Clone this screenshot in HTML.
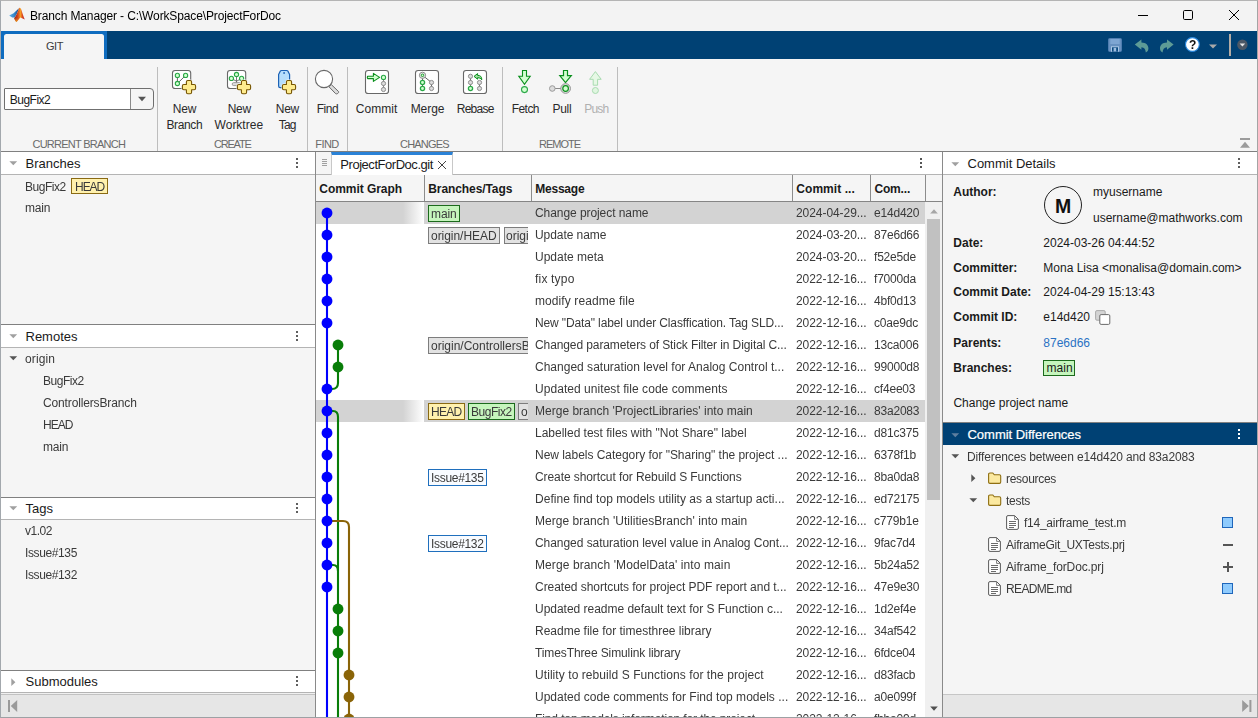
<!DOCTYPE html>
<html lang="en">
<head>
<meta charset="utf-8">
<title>Branch Manager</title>
<style>*{box-sizing:border-box;margin:0;padding:0}
html,body{width:1258px;height:718px;overflow:hidden;background:#f5f5f5}
body{font-family:"Liberation Sans",sans-serif;font-size:12px;color:#1a1a1a;position:relative}
.t{position:absolute;white-space:pre}
.b{position:absolute}
svg{position:absolute;overflow:visible}
#frame{position:absolute;left:0;top:0;width:1258px;height:718px;border:1px solid #b4b4b4;border-left-color:#a3a8ad;border-right-color:#a4a4a4;border-bottom-color:#9da1a4;z-index:50}
#title{position:absolute;left:0;top:0;width:1258px;height:31px;background:#f3f3f3}
#blue{position:absolute;left:1px;top:31px;width:1256px;height:28px;background:#004174}
#tabwrap{position:absolute;left:1px;top:31px;width:106px;height:28px;background:#0f6cbf}
#tab{position:absolute;left:4px;top:34px;width:100px;height:25px;background:#f5f5f5;border-radius:2.5px 2.5px 0 0}
#strip{position:absolute;left:1px;top:59px;width:1256px;height:92px;background:#f5f5f5}
.vs{position:absolute;top:67px;width:1px;height:84px;background:#bdbdbd}
.hl{position:absolute;height:1px;background:#7f7f7f}
.ph{position:absolute;height:24px;background:#fff;border-top:1px solid #808080;border-bottom:1px solid #b4b4b4}
.sel{position:absolute;left:316px;width:609px;height:22px;background:linear-gradient(to right,#d3d3d3 0,#d3d3d3 87px,#fff 108px,#d3d3d3 108px)}
.bd{position:absolute;height:17px;border:1px solid #7d7d7d;background:#e2e2e2}
.bd.g{background:#c6f5bd;border-color:#1c6a1c}
.bd.y{background:#fff1ae;border-color:#8a6a14}
.bd.w{background:#f8fbff;border-color:#1f6fbd}
.clip{position:absolute;overflow:hidden}
.cs{position:absolute;top:175px;width:1px;height:26px;background:#8c8c8c}
.gy{will-change:transform}
</style>
</head>
<body>
<div id="title"></div>
<svg style="left:8px;top:6px" width="18" height="18" viewBox="8 6 18 18">
<defs>
<linearGradient id="lgB" x1="0" y1="0" x2="1" y2="0"><stop offset="0" stop-color="#5fb0e6"/><stop offset="0.6" stop-color="#2f7fc4"/><stop offset="1" stop-color="#1b3f7a"/></linearGradient>
<linearGradient id="lgO" x1="0" y1="0" x2="1" y2="0"><stop offset="0" stop-color="#8c1d18"/><stop offset="0.35" stop-color="#d4451c"/><stop offset="0.6" stop-color="#f59a23"/><stop offset="0.8" stop-color="#d8401f"/><stop offset="1" stop-color="#b8242a"/></linearGradient>
<linearGradient id="lgY" x1="0" y1="0" x2="0" y2="1"><stop offset="0" stop-color="#e8601c" stop-opacity="0"/><stop offset="1" stop-color="#f7b71d"/></linearGradient>
</defs>
<path d="M9.2 15.4 L13.6 13.2 L17.6 9.6 L19 8.2 L17 13.5 L14.6 17.6 L12.2 17.6 Z" fill="url(#lgB)"/>
<path d="M19.6 7.7 C20.4 7.6 21 8.6 21.6 10.4 C22.6 13.6 23.6 17 24.8 19.4 C23.4 19 21.8 17.8 20.4 17.4 C19 18.6 17.8 20.8 16.3 22 C15.4 20.8 14.6 19.4 14.1 18.2 C15.6 16.6 17.2 13.4 18.4 10 C18.8 8.8 19.1 7.8 19.6 7.7 Z" fill="url(#lgO)"/>
<path d="M14.1 18.2 C14.6 19.4 15.4 20.8 16.3 22 C17.8 20.8 19 18.6 20.4 17.4 C18.6 17 16 17.4 14.1 18.2 Z" fill="url(#lgY)"/>
</svg>
<div class="t gy" style="left:30.00px;top:8px;font-size:12px;line-height:16px;color:#000;letter-spacing:-0.13px;">Branch Manager - C:\WorkSpace\ProjectForDoc</div>
<svg style="left:1130px;top:5px" width="120" height="22" viewBox="1130 5 120 22" fill="none" stroke="#000" stroke-width="1">
<path d="M1138 15.5 H1148"/>
<rect x="1183.5" y="10.5" width="9" height="9" rx="1.2"/>
<path d="M1229 10 L1239 20 M1239 10 L1229 20"/>
</svg>
<div id="blue"></div><div id="tabwrap"></div><div id="tab"></div>
<div class="t" style="left:46.00px;top:38px;font-size:11px;line-height:16px;color:#3c3c3c;letter-spacing:-0.45px;">GIT</div>
<svg style="left:1100px;top:32px" width="156" height="26" viewBox="1100 32 156 26">
<g><rect x="1108.5" y="38.5" width="13" height="13" rx="1" fill="#6791c0" stroke="#4f7db0" stroke-width="1"/><rect x="1110.3" y="39" width="9.4" height="5" fill="#7ea6d2"/><rect x="1111" y="46.3" width="8" height="5.4" fill="#a9c6e4"/><rect x="1112" y="47.3" width="6" height="4.4" fill="#0b4a80"/><rect x="1113.6" y="47.8" width="2.6" height="3.6" fill="#9dbde0"/></g>
<path d="M1134.8 44.6 L1141.4 39.4 V42.6 C1146.2 42.6 1148.4 45.4 1148.4 48.6 C1148.4 50.4 1147.4 51.8 1145.8 52.6 C1145.6 49.4 1144.4 47.4 1141.4 47.2 V49.8 Z" fill="#5d9b96"/>
<path d="M1173.6 44.6 L1167 39.4 V42.6 C1162.2 42.6 1160 45.4 1160 48.6 C1160 50.4 1161 51.8 1162.6 52.6 C1162.8 49.4 1164 47.4 1167 47.2 V49.8 Z" fill="#5d9b96"/>
<circle cx="1192.4" cy="44.5" r="6.9" fill="#fff" stroke="#2586de" stroke-width="1.1"/>
<path d="M1209 44.5 h8 l-4 4 z" fill="#a9a9a9"/>
<rect x="1229" y="34" width="2" height="22" fill="#b3aca5"/>
<circle cx="1242.4" cy="44.7" r="5.2" fill="#4c5866"/>
<path d="M1239.6 43.6 h5.6 l-2.8 3 z" fill="#e8e8e8"/>
</svg>
<div class="t gy" style="left:1189.00px;top:37px;font-size:12px;line-height:16px;color:#111;font-weight:bold;">?</div>
<div id="strip"></div>
<div class="vs" style="left:157px"></div>
<div class="vs" style="left:307px"></div>
<div class="vs" style="left:347px"></div>
<div class="vs" style="left:502px"></div>
<div class="vs" style="left:617px"></div>
<div class="hl" style="left:1px;top:151px;width:1256px"></div>
<div class="b" style="left:4px;top:88px;width:150px;height:22px;border:1px solid #6f6f6f;border-radius:1px 4px 4px 1px;background:#f5f5f5"></div>
<div class="b" style="left:5px;top:89px;width:126px;height:20px;background:#fff;border-right:1px solid #8a8a8a"></div>
<svg style="left:137px;top:96px" width="10" height="6" viewBox="0 0 10 6"><path d="M1 0.8 h8 l-4 4.4 z" fill="#555"/></svg>
<div class="t" style="left:9.70px;top:92px;font-size:12px;line-height:16px;color:#1a1a1a;letter-spacing:-0.49px;">BugFix2</div>
<div class="t" style="left:32.46px;top:136px;font-size:11px;line-height:16px;color:#6a6a6a;letter-spacing:-0.74px;">CURRENT BRANCH</div>
<div class="t" style="left:213.99px;top:136px;font-size:11px;line-height:16px;color:#6a6a6a;letter-spacing:-1.2px;">CREATE</div>
<div class="t" style="left:315.27px;top:136px;font-size:11px;line-height:16px;color:#6a6a6a;letter-spacing:-0.54px;">FIND</div>
<div class="t" style="left:400.12px;top:136px;font-size:11px;line-height:16px;color:#6a6a6a;letter-spacing:-0.84px;">CHANGES</div>
<div class="t" style="left:538.99px;top:136px;font-size:11px;line-height:16px;color:#6a6a6a;letter-spacing:-1.01px;">REMOTE</div>
<div class="t" style="left:172.80px;top:101px;font-size:12px;line-height:16px;color:#2a2a2a;letter-spacing:-0.17px;">New</div>
<div class="t" style="left:166.40px;top:117px;font-size:12px;line-height:16px;color:#2a2a2a;letter-spacing:-0.37px;">Branch</div>
<div class="t" style="left:227.70px;top:101px;font-size:12px;line-height:16px;color:#2a2a2a;letter-spacing:-0.27px;">New</div>
<div class="t" style="left:214.60px;top:117px;font-size:12px;line-height:16px;color:#2a2a2a;">Worktree</div>
<div class="t" style="left:275.80px;top:101px;font-size:12px;line-height:16px;color:#2a2a2a;letter-spacing:-0.31px;">New</div>
<div class="t" style="left:278.70px;top:117px;font-size:12px;line-height:16px;color:#2a2a2a;letter-spacing:-0.79px;">Tag</div>
<div class="t" style="left:316.70px;top:101px;font-size:12px;line-height:16px;color:#2a2a2a;letter-spacing:-0.49px;">Find</div>
<div class="t" style="left:355.80px;top:101px;font-size:12px;line-height:16px;color:#2a2a2a;letter-spacing:0.06px;">Commit</div>
<div class="t" style="left:410.70px;top:101px;font-size:12px;line-height:16px;color:#2a2a2a;letter-spacing:-0.06px;">Merge</div>
<div class="t" style="left:456.80px;top:101px;font-size:12px;line-height:16px;color:#2a2a2a;letter-spacing:-0.76px;">Rebase</div>
<div class="t" style="left:511.70px;top:101px;font-size:12px;line-height:16px;color:#2a2a2a;letter-spacing:-0.54px;">Fetch</div>
<div class="t" style="left:552.60px;top:101px;font-size:12px;line-height:16px;color:#2a2a2a;letter-spacing:-0.33px;">Pull</div>
<div class="t" style="left:584.30px;top:101px;font-size:12px;line-height:16px;color:#b0b0b0;letter-spacing:-0.81px;">Push</div>
<svg style="left:1240px;top:138px" width="10" height="10" viewBox="0 0 10 10"><path d="M0 0 h10 v2 h-10 z M5 3.8 l5 6 h-10 z" fill="#9c9c9c"/></svg>
<svg style="left:160px;top:64px" width="460" height="36" viewBox="160 64 460 36" fill="none"><rect x="172.5" y="70.5" width="18.2" height="18" rx="2.6" fill="#fff" stroke="#686868" stroke-width="1.1"/><path d="M177.4 75.4 V83.5 M177.4 83.5 L185.6 75.4" stroke="#555" stroke-width="0.9"/><circle cx="177.4" cy="75.4" r="2.1" fill="#d2ffd0" stroke="#2aa847" stroke-width="1.1"/><circle cx="185.6" cy="75.4" r="2.1" fill="#d2ffd0" stroke="#2aa847" stroke-width="1.1"/><circle cx="177.4" cy="83.5" r="2.1" fill="#d2ffd0" stroke="#2aa847" stroke-width="1.1"/><path d="M187.8 80.5 H190.2 Q191.6 80.5 191.6 81.9 V84.5 H194.2 Q195.6 84.5 195.6 85.9 V88.29999999999998 Q195.6 89.69999999999999 194.2 89.69999999999999 H191.6 V92.29999999999998 Q191.6 93.69999999999999 190.2 93.69999999999999 H187.8 Q186.4 93.69999999999999 186.4 92.29999999999998 V89.69999999999999 H183.8 Q182.4 89.69999999999999 182.4 88.29999999999998 V85.9 Q182.4 84.5 183.8 84.5 H186.4 V81.9 Q186.4 80.5 187.8 80.5 Z" fill="none" stroke="#f8f8f8" stroke-width="1.9" stroke-linejoin="round"/><path d="M187.8 80.5 H190.2 Q191.6 80.5 191.6 81.9 V84.5 H194.2 Q195.6 84.5 195.6 85.9 V88.29999999999998 Q195.6 89.69999999999999 194.2 89.69999999999999 H191.6 V92.29999999999998 Q191.6 93.69999999999999 190.2 93.69999999999999 H187.8 Q186.4 93.69999999999999 186.4 92.29999999999998 V89.69999999999999 H183.8 Q182.4 89.69999999999999 182.4 88.29999999999998 V85.9 Q182.4 84.5 183.8 84.5 H186.4 V81.9 Q186.4 80.5 187.8 80.5 Z" fill="#ffec8e" stroke="#765400" stroke-width="1.1" stroke-linejoin="round"/><rect x="227.5" y="70.5" width="18.2" height="18" rx="2.6" fill="#fff" stroke="#686868" stroke-width="1.1"/><path d="M236.5 76 V83 M232.6 79.2 L236.5 81.2 L240.4 79.2" stroke="#666" stroke-width="0.9"/><rect x="232.2" y="82.6" width="8.6" height="3" rx="1.5" fill="#dedede" stroke="#8a8a8a" stroke-width="0.8"/><circle cx="236.5" cy="74.5" r="2.1" fill="#d2ffd0" stroke="#2aa847" stroke-width="1.1"/><circle cx="231.4" cy="78.4" r="2.1" fill="#d2ffd0" stroke="#2aa847" stroke-width="1.1"/><circle cx="241.6" cy="78.4" r="2.1" fill="#d2ffd0" stroke="#2aa847" stroke-width="1.1"/><path d="M242.8 80.5 H245.2 Q246.6 80.5 246.6 81.9 V84.5 H249.2 Q250.6 84.5 250.6 85.9 V88.29999999999998 Q250.6 89.69999999999999 249.2 89.69999999999999 H246.6 V92.29999999999998 Q246.6 93.69999999999999 245.2 93.69999999999999 H242.8 Q241.4 93.69999999999999 241.4 92.29999999999998 V89.69999999999999 H238.8 Q237.4 89.69999999999999 237.4 88.29999999999998 V85.9 Q237.4 84.5 238.8 84.5 H241.4 V81.9 Q241.4 80.5 242.8 80.5 Z" fill="none" stroke="#f8f8f8" stroke-width="1.9" stroke-linejoin="round"/><path d="M242.8 80.5 H245.2 Q246.6 80.5 246.6 81.9 V84.5 H249.2 Q250.6 84.5 250.6 85.9 V88.29999999999998 Q250.6 89.69999999999999 249.2 89.69999999999999 H246.6 V92.29999999999998 Q246.6 93.69999999999999 245.2 93.69999999999999 H242.8 Q241.4 93.69999999999999 241.4 92.29999999999998 V89.69999999999999 H238.8 Q237.4 89.69999999999999 237.4 88.29999999999998 V85.9 Q237.4 84.5 238.8 84.5 H241.4 V81.9 Q241.4 80.5 242.8 80.5 Z" fill="#ffec8e" stroke="#765400" stroke-width="1.1" stroke-linejoin="round"/><path d="M281.6 70.5 H286.6 Q287.6 70.5 288.1 71.4 L289.6 74.6 V86 Q289.6 87.6 288 87.6 H280.2 Q278.6 87.6 278.6 86 V74.6 L280.1 71.4 Q280.6 70.5 281.6 70.5 Z" fill="#b6defc" stroke="#1c62b6" stroke-width="1.2" stroke-linejoin="round"/><rect x="283.3" y="72.2" width="1.6" height="1.6" fill="#1c62b6"/><path d="M287.79999999999995 80.5 H290.20000000000005 Q291.6 80.5 291.6 81.9 V84.5 H294.20000000000005 Q295.6 84.5 295.6 85.9 V88.29999999999998 Q295.6 89.69999999999999 294.20000000000005 89.69999999999999 H291.6 V92.29999999999998 Q291.6 93.69999999999999 290.20000000000005 93.69999999999999 H287.79999999999995 Q286.4 93.69999999999999 286.4 92.29999999999998 V89.69999999999999 H283.79999999999995 Q282.4 89.69999999999999 282.4 88.29999999999998 V85.9 Q282.4 84.5 283.79999999999995 84.5 H286.4 V81.9 Q286.4 80.5 287.79999999999995 80.5 Z" fill="none" stroke="#f8f8f8" stroke-width="1.9" stroke-linejoin="round"/><path d="M287.79999999999995 80.5 H290.20000000000005 Q291.6 80.5 291.6 81.9 V84.5 H294.20000000000005 Q295.6 84.5 295.6 85.9 V88.29999999999998 Q295.6 89.69999999999999 294.20000000000005 89.69999999999999 H291.6 V92.29999999999998 Q291.6 93.69999999999999 290.20000000000005 93.69999999999999 H287.79999999999995 Q286.4 93.69999999999999 286.4 92.29999999999998 V89.69999999999999 H283.79999999999995 Q282.4 89.69999999999999 282.4 88.29999999999998 V85.9 Q282.4 84.5 283.79999999999995 84.5 H286.4 V81.9 Q286.4 80.5 287.79999999999995 80.5 Z" fill="#ffec8e" stroke="#765400" stroke-width="1.1" stroke-linejoin="round"/><path d="M331.3 84.6 L338.6 91.6 Q339 92.6 337.6 93.6 Q336.4 94.2 335.6 93.6 L328.8 86.6 Z" fill="#dcdcdc" stroke="#666" stroke-width="1" stroke-linejoin="round"/><circle cx="324" cy="79" r="8.6" fill="#fff" stroke="#686868" stroke-width="1.1"/><rect x="365.5" y="70.5" width="23" height="23" rx="2.6" fill="#fff" stroke="#686868" stroke-width="1.1"/><path d="M383.5 77.4 V89.5" stroke="#777" stroke-width="0.9"/><circle cx="383.5" cy="77.4" r="2.1" fill="#d2ffd0" stroke="#2aa847" stroke-width="1.1"/><circle cx="383.5" cy="83.5" r="2.1" fill="#dcdcdc" stroke="#8e8e8e" stroke-width="1"/><circle cx="383.5" cy="89.5" r="2.1" fill="#dcdcdc" stroke="#8e8e8e" stroke-width="1"/><path d="M367.6 76.2 H373.4 V73.4 L379.6 77.4 L373.4 81.4 V78.6 H367.6 Q367 77.4 367.6 76.2 Z" fill="#d2ffd0" stroke="#0a8f1c" stroke-width="1.1" stroke-linejoin="round"/><rect x="415.5" y="70.5" width="23" height="23" rx="2.6" fill="#fff" stroke="#686868" stroke-width="1.1"/><path d="M422.5 75.3 V88.5 M422.5 75.3 L431.5 82.5 V88.5" stroke="#555" stroke-width="0.9"/><circle cx="422.5" cy="75.3" r="3.1" fill="#f0f0f0" stroke="#8a8a8a" stroke-width="1"/><circle cx="422.5" cy="75.3" r="1.3" fill="#d2ffd0" stroke="#0a8f1c" stroke-width="0.9"/><circle cx="422.5" cy="82.5" r="2.1" fill="#d2ffd0" stroke="#2aa847" stroke-width="1.3"/><circle cx="422.5" cy="88.5" r="2.1" fill="#d2ffd0" stroke="#2aa847" stroke-width="1.3"/><circle cx="431.5" cy="82.5" r="2.1" fill="#dcdcdc" stroke="#8e8e8e" stroke-width="1"/><circle cx="431.5" cy="88.5" r="2.1" fill="#dcdcdc" stroke="#8e8e8e" stroke-width="1"/><rect x="463.5" y="70.5" width="23" height="23" rx="2.6" fill="#fff" stroke="#686868" stroke-width="1.1"/><path d="M470.5 76.3 V88.5 M479.5 82.5 V88.5" stroke="#666" stroke-width="0.9"/><circle cx="470.5" cy="76.3" r="2.1" fill="#dcdcdc" stroke="#8e8e8e" stroke-width="1"/><circle cx="470.5" cy="82.5" r="2.1" fill="#dcdcdc" stroke="#8e8e8e" stroke-width="1"/><circle cx="479.5" cy="82.5" r="2.1" fill="#dcdcdc" stroke="#8e8e8e" stroke-width="1"/><circle cx="479.5" cy="88.5" r="2.1" fill="#dcdcdc" stroke="#8e8e8e" stroke-width="1"/><circle cx="470.5" cy="88.5" r="2.1" fill="#d2ffd0" stroke="#2aa847" stroke-width="1.3"/><path d="M474 76.4 L477.6 73.6 V75.4 Q481.8 75.2 481.8 79.8 Q480.6 77.6 477.6 77.6 V79.2 Z" fill="#9fe0a0" stroke="#0a8f1c" stroke-width="1" stroke-linejoin="round"/><path d="M522.5 70.5 H526.5 V76.3 H530.2 L524.5 84.2 L518.8 76.3 H522.5 Z" fill="#d2ffd0" stroke="#0a8f1c" stroke-width="1.1" stroke-linejoin="miter"/><circle cx="524.5" cy="89.6" r="3" fill="#d2ffd0" stroke="#2aa847" stroke-width="1.1"/><path d="M563.5 70.5 H567.5 V75.6 H571.3 L565.5 82.6 L559.8 75.6 H563.5 Z" fill="#d2ffd0" stroke="#0a8f1c" stroke-width="1.2" stroke-linejoin="miter"/><path d="M555 88.5 H561" stroke="#8a8a8a" stroke-width="1"/><circle cx="552.3" cy="88.5" r="2.8" fill="#dcdcdc" stroke="#9a9a9a" stroke-width="1"/><circle cx="565.6" cy="88.5" r="4.8" fill="#e6e6e6" stroke="#8e8e8e" stroke-width="1"/><circle cx="565.6" cy="88.5" r="2.8" fill="#d2ffd0" stroke="#0a8f1c" stroke-width="1.2"/><path d="M595.4 71.6 L601.2 79.3 H597.6 V85.2 H593.2 V79.3 H589.6 Z" fill="#e6f8e5" stroke="#a8dbb0" stroke-width="1" stroke-linejoin="miter"/><circle cx="595.4" cy="90.5" r="3" fill="#e0f6e0" stroke="#a8dbb0" stroke-width="1"/></svg>
<div class="b" style="left:315px;top:152px;width:1px;height:566px;background:#8a8a8a"></div>
<div class="ph" style="left:1px;top:151px;width:314px;height:24px;background:#fff"></div>
<svg style="left:9px;top:161.4px" width="9" height="5" viewBox="0 0 9 5"><path d="M0.4 0.2 h7.8 l-3.9 4.1 z" fill="#a0a0a0"/></svg>
<div class="t" style="left:25.50px;top:155.5px;font-size:13px;line-height:16px;color:#1a1a1a;">Branches</div>
<svg style="left:296px;top:158px" width="2" height="10" viewBox="0 0 2 10" shape-rendering="crispEdges"><rect x="0" y="0" width="2" height="2" fill="#5e5e5e"/><rect x="0" y="4" width="2" height="2" fill="#5e5e5e"/><rect x="0" y="8" width="2" height="2" fill="#5e5e5e"/></svg>
<div class="ph" style="left:1px;top:324px;width:314px;height:24px;background:#fff"></div>
<svg style="left:9px;top:334.4px" width="9" height="5" viewBox="0 0 9 5"><path d="M0.4 0.2 h7.8 l-3.9 4.1 z" fill="#a0a0a0"/></svg>
<div class="t" style="left:25.50px;top:328.5px;font-size:13px;line-height:16px;color:#1a1a1a;">Remotes</div>
<svg style="left:296px;top:331px" width="2" height="10" viewBox="0 0 2 10" shape-rendering="crispEdges"><rect x="0" y="0" width="2" height="2" fill="#5e5e5e"/><rect x="0" y="4" width="2" height="2" fill="#5e5e5e"/><rect x="0" y="8" width="2" height="2" fill="#5e5e5e"/></svg>
<div class="ph" style="left:1px;top:497px;width:314px;height:23px;background:#fff"></div>
<svg style="left:9px;top:506.4px" width="9" height="5" viewBox="0 0 9 5"><path d="M0.4 0.2 h7.8 l-3.9 4.1 z" fill="#a0a0a0"/></svg>
<div class="t" style="left:25.50px;top:500.5px;font-size:13px;line-height:16px;color:#1a1a1a;">Tags</div>
<svg style="left:296px;top:503px" width="2" height="10" viewBox="0 0 2 10" shape-rendering="crispEdges"><rect x="0" y="0" width="2" height="2" fill="#5e5e5e"/><rect x="0" y="4" width="2" height="2" fill="#5e5e5e"/><rect x="0" y="8" width="2" height="2" fill="#5e5e5e"/></svg>
<div class="ph" style="left:1px;top:670px;width:314px;height:23px;background:#fff"></div>
<svg style="left:11px;top:678px" width="5" height="9" viewBox="0 0 5 9"><path d="M0.3 0.3 v7.8 l4.1 -3.9 z" fill="#a0a0a0"/></svg>
<div class="t" style="left:25.50px;top:673.5px;font-size:13px;line-height:16px;color:#1a1a1a;">Submodules</div>
<svg style="left:296px;top:676px" width="2" height="10" viewBox="0 0 2 10" shape-rendering="crispEdges"><rect x="0" y="0" width="2" height="2" fill="#5e5e5e"/><rect x="0" y="4" width="2" height="2" fill="#5e5e5e"/><rect x="0" y="8" width="2" height="2" fill="#5e5e5e"/></svg>
<div class="t gy" style="left:25.00px;top:179px;font-size:12px;line-height:16px;color:#3a3a3a;letter-spacing:-0.46px;">BugFix2</div>
<div class="bd y" style="left:71px;top:178px;width:37px;height:16px"></div>
<div class="t gy" style="left:75.00px;top:179px;font-size:12px;line-height:16px;color:#3a3a3a;letter-spacing:-1.04px;">HEAD</div>
<div class="t gy" style="left:25.00px;top:200px;font-size:12px;line-height:16px;color:#3a3a3a;letter-spacing:-0.2px;">main</div>
<svg style="left:9px;top:356px" width="9" height="5" viewBox="0 0 9 5"><path d="M0.4 0.2 h7.8 l-3.9 4.1 z" fill="#555"/></svg>
<div class="t gy" style="left:25.00px;top:351px;font-size:12px;line-height:16px;color:#3a3a3a;letter-spacing:0.11px;">origin</div>
<div class="t gy" style="left:43.00px;top:373px;font-size:12px;line-height:16px;color:#3a3a3a;letter-spacing:-0.46px;">BugFix2</div>
<div class="t gy" style="left:43.00px;top:395px;font-size:12px;line-height:16px;color:#3a3a3a;letter-spacing:-0.14px;">ControllersBranch</div>
<div class="t gy" style="left:43.00px;top:417px;font-size:12px;line-height:16px;color:#3a3a3a;letter-spacing:-0.94px;">HEAD</div>
<div class="t gy" style="left:43.00px;top:439px;font-size:12px;line-height:16px;color:#3a3a3a;letter-spacing:-0.2px;">main</div>
<div class="t gy" style="left:25.00px;top:523px;font-size:12px;line-height:16px;color:#3a3a3a;letter-spacing:-0.47px;">v1.02</div>
<div class="t gy" style="left:25.00px;top:545px;font-size:12px;line-height:16px;color:#3a3a3a;letter-spacing:-0.38px;">Issue#135</div>
<div class="t gy" style="left:25.00px;top:567px;font-size:12px;line-height:16px;color:#3a3a3a;letter-spacing:-0.38px;">Issue#132</div>
<div class="b" style="left:1px;top:693px;width:314px;height:1px;background:#f0f0f0"></div><div class="b" style="left:1px;top:694px;width:314px;height:23px;background:#e6e6e6;border-top:1px solid #c2c2c2"></div>
<svg style="left:8px;top:700px" width="10" height="12" viewBox="0 0 10 12"><path d="M0 0 h2 v12 h-2 z M9.2 0 v12 l-6.4 -6 z" fill="#9a9a9a"/></svg>
<div class="b" style="left:316px;top:152px;width:626px;height:566px;background:#fff"></div>
<div class="b" style="left:316px;top:152px;width:16px;height:22px;background:#f5f5f5"></div>
<div class="b" style="left:316px;top:174px;width:626px;height:1px;background:#b4b4b4"></div>
<div class="b" style="left:331px;top:152px;width:122px;height:23px;background:#fff;border-left:1px solid #c8c8c8;border-right:1px solid #c8c8c8;border-top:3px solid #2a82d7"></div>
<svg style="left:322px;top:159px" width="5" height="8" viewBox="0 0 5 8"><path d="M0 0.5h5M0 2.5h5M0 4.5h5M0 6.5h5" stroke="#8a8a8a" stroke-width="0.8"/></svg>
<div class="t" style="left:340.30px;top:156.5px;font-size:13px;line-height:16px;color:#1a1a1a;letter-spacing:-0.46px;">ProjectForDoc.git</div>
<svg style="left:437px;top:160px" width="10" height="10" viewBox="0 0 10 10"><path d="M1 1 L9 9 M9 1 L1 9" stroke="#444" stroke-width="1" fill="none"/></svg>
<svg style="left:920px;top:158px" width="2" height="10" viewBox="0 0 2 10" shape-rendering="crispEdges"><rect x="0" y="0" width="2" height="2" fill="#555"/><rect x="0" y="4" width="2" height="2" fill="#555"/><rect x="0" y="8" width="2" height="2" fill="#555"/></svg>
<div class="b" style="left:316px;top:175px;width:626px;height:26px;background:#f5f5f5"></div>
<div class="b" style="left:316px;top:201px;width:626px;height:1px;background:#858585"></div>
<div class="cs" style="left:424px"></div>
<div class="cs" style="left:531px"></div>
<div class="cs" style="left:792px"></div>
<div class="cs" style="left:870px"></div>
<div class="cs" style="left:925px"></div>
<div class="t" style="left:319.30px;top:181px;font-size:12px;line-height:16px;color:#1a1a1a;font-weight:bold;letter-spacing:-0.05px;">Commit Graph</div>
<div class="t" style="left:428.30px;top:181px;font-size:12px;line-height:16px;color:#1a1a1a;font-weight:bold;letter-spacing:-0.09px;">Branches/Tags</div>
<div class="t" style="left:535.30px;top:181px;font-size:12px;line-height:16px;color:#1a1a1a;font-weight:bold;letter-spacing:-0.24px;">Message</div>
<div class="t" style="left:796.30px;top:181px;font-size:12px;line-height:16px;color:#1a1a1a;font-weight:bold;letter-spacing:0.05px;">Commit ...</div>
<div class="t" style="left:874.40px;top:181px;font-size:12px;line-height:16px;color:#1a1a1a;font-weight:bold;letter-spacing:-0.15px;">Com...</div>
<div class="b" style="left:925px;top:202px;width:17px;height:515px;background:#f0f0f0"></div>
<div class="b" style="left:927px;top:219px;width:13px;height:281px;background:#c1c1c1"></div>
<svg style="left:929.5px;top:208.5px" width="8" height="5" viewBox="0 0 8 5"><path d="M4 0.3 L7.8 4.6 H0.2 Z" fill="#a6a6a6"/></svg>
<svg style="left:929.5px;top:705.5px" width="8" height="5" viewBox="0 0 8 5"><path d="M4 4.7 L7.8 0.4 H0.2 Z" fill="#505050"/></svg>
<div class="sel" style="top:202px"></div>
<div class="sel" style="top:400px"></div>
<div class="clip" style="left:425px;top:202px;width:102.6px;height:516px">
<div class="bd g" style="left:3px;top:3px;width:32px"></div>
<div class="t gy" style="left:6.00px;top:4px;font-size:12px;line-height:16px;color:#3a3a3a;letter-spacing:-0.1px;">main</div>
<div class="bd " style="left:3px;top:25px;width:72px"></div>
<div class="t gy" style="left:6.00px;top:26px;font-size:12px;line-height:16px;color:#3a3a3a;letter-spacing:-0.04px;">origin/HEAD</div>
<div class="bd " style="left:78.5px;top:25px;width:66.5px"></div>
<div class="t gy" style="left:81.00px;top:26px;font-size:12px;line-height:16px;color:#3a3a3a;">origin/main</div>
<div class="bd " style="left:3px;top:135px;width:132px"></div>
<div class="t gy" style="left:6.00px;top:136px;font-size:12px;line-height:16px;color:#3a3a3a;">origin/ControllersBranch</div>
<div class="bd y" style="left:3px;top:201px;width:37px"></div>
<div class="t gy" style="left:6.00px;top:202px;font-size:12px;line-height:16px;color:#3a3a3a;letter-spacing:-0.69px;">HEAD</div>
<div class="bd g" style="left:43px;top:201px;width:47px"></div>
<div class="t gy" style="left:46.00px;top:202px;font-size:12px;line-height:16px;color:#3a3a3a;letter-spacing:-0.49px;">BugFix2</div>
<div class="bd " style="left:93px;top:201px;width:72px"></div>
<div class="t gy" style="left:96.00px;top:202px;font-size:12px;line-height:16px;color:#3a3a3a;">origin/BugFix2</div>
<div class="bd w" style="left:3px;top:267px;width:59px"></div>
<div class="t gy" style="left:6.00px;top:268px;font-size:12px;line-height:16px;color:#3a3a3a;letter-spacing:-0.31px;">Issue#135</div>
<div class="bd w" style="left:3px;top:333px;width:59px"></div>
<div class="t gy" style="left:6.00px;top:334px;font-size:12px;line-height:16px;color:#3a3a3a;letter-spacing:-0.31px;">Issue#132</div>
</div>
<div class="t gy" style="left:535.00px;top:205px;font-size:12px;line-height:16px;color:#3a3a3a;letter-spacing:-0.07px;">Change project name</div>
<div class="t gy" style="left:796.00px;top:205px;font-size:12px;line-height:16px;color:#3a3a3a;letter-spacing:-0.06px;">2024-04-29...</div>
<div class="t gy" style="left:874.00px;top:205px;font-size:12px;line-height:16px;color:#3a3a3a;letter-spacing:-0.2px;">e14d420</div>
<div class="t gy" style="left:535.00px;top:227px;font-size:12px;line-height:16px;color:#3a3a3a;letter-spacing:-0.07px;">Update name</div>
<div class="t gy" style="left:796.00px;top:227px;font-size:12px;line-height:16px;color:#3a3a3a;letter-spacing:-0.06px;">2024-03-20...</div>
<div class="t gy" style="left:874.00px;top:227px;font-size:12px;line-height:16px;color:#3a3a3a;letter-spacing:-0.2px;">87e6d66</div>
<div class="t gy" style="left:535.00px;top:249px;font-size:12px;line-height:16px;color:#3a3a3a;">Update meta</div>
<div class="t gy" style="left:796.00px;top:249px;font-size:12px;line-height:16px;color:#3a3a3a;letter-spacing:-0.06px;">2024-03-20...</div>
<div class="t gy" style="left:874.00px;top:249px;font-size:12px;line-height:16px;color:#3a3a3a;letter-spacing:-0.2px;">f52e5de</div>
<div class="t gy" style="left:535.00px;top:271px;font-size:12px;line-height:16px;color:#3a3a3a;letter-spacing:0.19px;">fix typo</div>
<div class="t gy" style="left:796.00px;top:271px;font-size:12px;line-height:16px;color:#3a3a3a;letter-spacing:-0.06px;">2022-12-16...</div>
<div class="t gy" style="left:874.00px;top:271px;font-size:12px;line-height:16px;color:#3a3a3a;letter-spacing:-0.2px;">f7000da</div>
<div class="t gy" style="left:535.00px;top:293px;font-size:12px;line-height:16px;color:#3a3a3a;letter-spacing:0.09px;">modify readme file</div>
<div class="t gy" style="left:796.00px;top:293px;font-size:12px;line-height:16px;color:#3a3a3a;letter-spacing:-0.06px;">2022-12-16...</div>
<div class="t gy" style="left:874.00px;top:293px;font-size:12px;line-height:16px;color:#3a3a3a;letter-spacing:-0.2px;">4bf0d13</div>
<div class="t gy" style="left:535.00px;top:315px;font-size:12px;line-height:16px;color:#3a3a3a;letter-spacing:-0.13px;">New &quot;Data&quot; label under Clasffication. Tag SLD...</div>
<div class="t gy" style="left:796.00px;top:315px;font-size:12px;line-height:16px;color:#3a3a3a;letter-spacing:-0.06px;">2022-12-16...</div>
<div class="t gy" style="left:874.00px;top:315px;font-size:12px;line-height:16px;color:#3a3a3a;letter-spacing:-0.2px;">c0ae9dc</div>
<div class="t gy" style="left:535.00px;top:337px;font-size:12px;line-height:16px;color:#3a3a3a;letter-spacing:-0.1px;">Changed parameters of Stick Filter in Digital C...</div>
<div class="t gy" style="left:796.00px;top:337px;font-size:12px;line-height:16px;color:#3a3a3a;letter-spacing:-0.06px;">2022-12-16...</div>
<div class="t gy" style="left:874.00px;top:337px;font-size:12px;line-height:16px;color:#3a3a3a;letter-spacing:-0.2px;">13ca006</div>
<div class="t gy" style="left:535.00px;top:359px;font-size:12px;line-height:16px;color:#3a3a3a;letter-spacing:0.01px;">Changed saturation level for Analog Control t...</div>
<div class="t gy" style="left:796.00px;top:359px;font-size:12px;line-height:16px;color:#3a3a3a;letter-spacing:-0.06px;">2022-12-16...</div>
<div class="t gy" style="left:874.00px;top:359px;font-size:12px;line-height:16px;color:#3a3a3a;letter-spacing:-0.2px;">99000d8</div>
<div class="t gy" style="left:535.00px;top:381px;font-size:12px;line-height:16px;color:#3a3a3a;letter-spacing:0.05px;">Updated unitest file code comments</div>
<div class="t gy" style="left:796.00px;top:381px;font-size:12px;line-height:16px;color:#3a3a3a;letter-spacing:-0.06px;">2022-12-16...</div>
<div class="t gy" style="left:874.00px;top:381px;font-size:12px;line-height:16px;color:#3a3a3a;letter-spacing:-0.2px;">cf4ee03</div>
<div class="t gy" style="left:535.00px;top:403px;font-size:12px;line-height:16px;color:#3a3a3a;letter-spacing:0.01px;">Merge branch &#x27;ProjectLibraries&#x27; into main</div>
<div class="t gy" style="left:796.00px;top:403px;font-size:12px;line-height:16px;color:#3a3a3a;letter-spacing:-0.06px;">2022-12-16...</div>
<div class="t gy" style="left:874.00px;top:403px;font-size:12px;line-height:16px;color:#3a3a3a;letter-spacing:-0.2px;">83a2083</div>
<div class="t gy" style="left:535.00px;top:425px;font-size:12px;line-height:16px;color:#3a3a3a;letter-spacing:-0.01px;">Labelled test files with &quot;Not Share&quot; label</div>
<div class="t gy" style="left:796.00px;top:425px;font-size:12px;line-height:16px;color:#3a3a3a;letter-spacing:-0.06px;">2022-12-16...</div>
<div class="t gy" style="left:874.00px;top:425px;font-size:12px;line-height:16px;color:#3a3a3a;letter-spacing:-0.2px;">d81c375</div>
<div class="t gy" style="left:535.00px;top:447px;font-size:12px;line-height:16px;color:#3a3a3a;letter-spacing:-0.03px;">New labels Category for &quot;Sharing&quot; the project ...</div>
<div class="t gy" style="left:796.00px;top:447px;font-size:12px;line-height:16px;color:#3a3a3a;letter-spacing:-0.06px;">2022-12-16...</div>
<div class="t gy" style="left:874.00px;top:447px;font-size:12px;line-height:16px;color:#3a3a3a;letter-spacing:-0.2px;">6378f1b</div>
<div class="t gy" style="left:535.00px;top:469px;font-size:12px;line-height:16px;color:#3a3a3a;letter-spacing:-0.09px;">Create shortcut for Rebuild S Functions</div>
<div class="t gy" style="left:796.00px;top:469px;font-size:12px;line-height:16px;color:#3a3a3a;letter-spacing:-0.06px;">2022-12-16...</div>
<div class="t gy" style="left:874.00px;top:469px;font-size:12px;line-height:16px;color:#3a3a3a;letter-spacing:-0.2px;">8ba0da8</div>
<div class="t gy" style="left:535.00px;top:491px;font-size:12px;line-height:16px;color:#3a3a3a;letter-spacing:0.03px;">Define find top models utility as a startup acti...</div>
<div class="t gy" style="left:796.00px;top:491px;font-size:12px;line-height:16px;color:#3a3a3a;letter-spacing:-0.06px;">2022-12-16...</div>
<div class="t gy" style="left:874.00px;top:491px;font-size:12px;line-height:16px;color:#3a3a3a;letter-spacing:-0.2px;">ed72175</div>
<div class="t gy" style="left:535.00px;top:513px;font-size:12px;line-height:16px;color:#3a3a3a;letter-spacing:0.04px;">Merge branch &#x27;UtilitiesBranch&#x27; into main</div>
<div class="t gy" style="left:796.00px;top:513px;font-size:12px;line-height:16px;color:#3a3a3a;letter-spacing:-0.06px;">2022-12-16...</div>
<div class="t gy" style="left:874.00px;top:513px;font-size:12px;line-height:16px;color:#3a3a3a;letter-spacing:-0.2px;">c779b1e</div>
<div class="t gy" style="left:535.00px;top:535px;font-size:12px;line-height:16px;color:#3a3a3a;letter-spacing:-0.05px;">Changed saturation level value in Analog Cont...</div>
<div class="t gy" style="left:796.00px;top:535px;font-size:12px;line-height:16px;color:#3a3a3a;letter-spacing:-0.06px;">2022-12-16...</div>
<div class="t gy" style="left:874.00px;top:535px;font-size:12px;line-height:16px;color:#3a3a3a;letter-spacing:-0.2px;">9fac7d4</div>
<div class="t gy" style="left:535.00px;top:557px;font-size:12px;line-height:16px;color:#3a3a3a;letter-spacing:0.1px;">Merge branch &#x27;ModelData&#x27; into main</div>
<div class="t gy" style="left:796.00px;top:557px;font-size:12px;line-height:16px;color:#3a3a3a;letter-spacing:-0.06px;">2022-12-16...</div>
<div class="t gy" style="left:874.00px;top:557px;font-size:12px;line-height:16px;color:#3a3a3a;letter-spacing:-0.2px;">5b24a52</div>
<div class="t gy" style="left:535.00px;top:579px;font-size:12px;line-height:16px;color:#3a3a3a;letter-spacing:-0.04px;">Created shortcuts for project PDF report and t...</div>
<div class="t gy" style="left:796.00px;top:579px;font-size:12px;line-height:16px;color:#3a3a3a;letter-spacing:-0.06px;">2022-12-16...</div>
<div class="t gy" style="left:874.00px;top:579px;font-size:12px;line-height:16px;color:#3a3a3a;letter-spacing:-0.2px;">47e9e30</div>
<div class="t gy" style="left:535.00px;top:601px;font-size:12px;line-height:16px;color:#3a3a3a;letter-spacing:-0.02px;">Updated readme default text for S Function c...</div>
<div class="t gy" style="left:796.00px;top:601px;font-size:12px;line-height:16px;color:#3a3a3a;letter-spacing:-0.06px;">2022-12-16...</div>
<div class="t gy" style="left:874.00px;top:601px;font-size:12px;line-height:16px;color:#3a3a3a;letter-spacing:-0.2px;">1d2ef4e</div>
<div class="t gy" style="left:535.00px;top:623px;font-size:12px;line-height:16px;color:#3a3a3a;letter-spacing:-0.01px;">Readme file for timesthree library</div>
<div class="t gy" style="left:796.00px;top:623px;font-size:12px;line-height:16px;color:#3a3a3a;letter-spacing:-0.06px;">2022-12-16...</div>
<div class="t gy" style="left:874.00px;top:623px;font-size:12px;line-height:16px;color:#3a3a3a;letter-spacing:-0.2px;">34af542</div>
<div class="t gy" style="left:535.00px;top:645px;font-size:12px;line-height:16px;color:#3a3a3a;letter-spacing:-0.11px;">TimesThree Simulink library</div>
<div class="t gy" style="left:796.00px;top:645px;font-size:12px;line-height:16px;color:#3a3a3a;letter-spacing:-0.06px;">2022-12-16...</div>
<div class="t gy" style="left:874.00px;top:645px;font-size:12px;line-height:16px;color:#3a3a3a;letter-spacing:-0.2px;">6fdce04</div>
<div class="t gy" style="left:535.00px;top:667px;font-size:12px;line-height:16px;color:#3a3a3a;letter-spacing:0.07px;">Utility to rebuild S Functions for the project</div>
<div class="t gy" style="left:796.00px;top:667px;font-size:12px;line-height:16px;color:#3a3a3a;letter-spacing:-0.06px;">2022-12-16...</div>
<div class="t gy" style="left:874.00px;top:667px;font-size:12px;line-height:16px;color:#3a3a3a;letter-spacing:-0.2px;">d83facb</div>
<div class="t gy" style="left:535.00px;top:689px;font-size:12px;line-height:16px;color:#3a3a3a;letter-spacing:0.01px;">Updated code comments for Find top models ...</div>
<div class="t gy" style="left:796.00px;top:689px;font-size:12px;line-height:16px;color:#3a3a3a;letter-spacing:-0.06px;">2022-12-16...</div>
<div class="t gy" style="left:874.00px;top:689px;font-size:12px;line-height:16px;color:#3a3a3a;letter-spacing:-0.2px;">a0e099f</div>
<div class="t gy" style="left:535.00px;top:711px;font-size:12px;line-height:16px;color:#3a3a3a;letter-spacing:-0.11px;">Find top models information for the project</div>
<div class="t gy" style="left:796.00px;top:711px;font-size:12px;line-height:16px;color:#3a3a3a;letter-spacing:-0.06px;">2022-12-16...</div>
<div class="t gy" style="left:874.00px;top:711px;font-size:12px;line-height:16px;color:#3a3a3a;letter-spacing:-0.2px;">fbba09d</div>
<svg style="left:316px;top:202px" width="109" height="516" viewBox="316 202 109 516" fill="none" stroke-width="2.1"><path d="M327 213 V720" stroke="#0000ff"/><path d="M338 345 V383 Q338 389 332 389 H327" stroke="#087d08"/><path d="M327 411 H333 Q338 411 338 417 V720" stroke="#087d08"/><path d="M327 565 H333 Q338 565 338 571" stroke="#087d08"/><path d="M327 521 H343 Q349 521 349 527 V720" stroke="#8a6408"/><circle cx="327" cy="213" r="5.45" fill="#0000ff" stroke="none"/><circle cx="327" cy="235" r="5.45" fill="#0000ff" stroke="none"/><circle cx="327" cy="257" r="5.45" fill="#0000ff" stroke="none"/><circle cx="327" cy="279" r="5.45" fill="#0000ff" stroke="none"/><circle cx="327" cy="301" r="5.45" fill="#0000ff" stroke="none"/><circle cx="327" cy="323" r="5.45" fill="#0000ff" stroke="none"/><circle cx="338" cy="345" r="5.45" fill="#087d08" stroke="none"/><circle cx="338" cy="367" r="5.45" fill="#087d08" stroke="none"/><circle cx="327" cy="389" r="5.45" fill="#0000ff" stroke="none"/><circle cx="327" cy="411" r="5.45" fill="#0000ff" stroke="none"/><circle cx="327" cy="433" r="5.45" fill="#0000ff" stroke="none"/><circle cx="327" cy="455" r="5.45" fill="#0000ff" stroke="none"/><circle cx="327" cy="477" r="5.45" fill="#0000ff" stroke="none"/><circle cx="327" cy="499" r="5.45" fill="#0000ff" stroke="none"/><circle cx="327" cy="521" r="5.45" fill="#0000ff" stroke="none"/><circle cx="327" cy="543" r="5.45" fill="#0000ff" stroke="none"/><circle cx="327" cy="565" r="5.45" fill="#0000ff" stroke="none"/><circle cx="327" cy="587" r="5.45" fill="#0000ff" stroke="none"/><circle cx="338" cy="609" r="5.45" fill="#087d08" stroke="none"/><circle cx="338" cy="631" r="5.45" fill="#087d08" stroke="none"/><circle cx="338" cy="653" r="5.45" fill="#087d08" stroke="none"/><circle cx="349" cy="675" r="5.45" fill="#8a6408" stroke="none"/><circle cx="349" cy="697" r="5.45" fill="#8a6408" stroke="none"/><circle cx="349" cy="719" r="5.45" fill="#8a6408" stroke="none"/></svg>
<div class="b" style="left:942px;top:152px;width:1px;height:566px;background:#8a8a8a"></div>
<div class="ph" style="left:943px;top:151px;width:314px;height:24px;background:#fff;border-bottom-color:#b4b4b4"></div>
<svg style="left:951px;top:161.6px" width="9" height="5" viewBox="0 0 9 5"><path d="M0.4 0.2 h7.8 l-3.9 4.1 z" fill="#a0a0a0"/></svg>
<div class="t" style="left:967.50px;top:155.5px;font-size:13px;line-height:16px;color:#1a1a1a;">Commit Details</div>
<svg style="left:1238px;top:158px" width="2" height="10" viewBox="0 0 2 10" shape-rendering="crispEdges"><rect x="0" y="0" width="2" height="2" fill="#5e5e5e"/><rect x="0" y="4" width="2" height="2" fill="#5e5e5e"/><rect x="0" y="8" width="2" height="2" fill="#5e5e5e"/></svg>
<div class="ph" style="left:943px;top:422px;width:314px;height:23px;background:#004174;border-bottom-color:#004174"></div>
<svg style="left:951px;top:432.6px" width="9" height="5" viewBox="0 0 9 5"><path d="M0.4 0.2 h7.8 l-3.9 4.1 z" fill="#5f7f9f"/></svg>
<div class="t" style="left:967.50px;top:426.5px;font-size:13px;line-height:16px;color:#fff;letter-spacing:-0.02px;-webkit-text-stroke:0.22px #fff;">Commit Differences</div>
<svg style="left:1238px;top:429px" width="2" height="10" viewBox="0 0 2 10" shape-rendering="crispEdges"><rect x="0" y="0" width="2" height="2" fill="#fff"/><rect x="0" y="4" width="2" height="2" fill="#fff"/><rect x="0" y="8" width="2" height="2" fill="#fff"/></svg>
<div class="t" style="left:953.30px;top:184px;font-size:12px;line-height:16px;color:#1a1a1a;font-weight:bold;">Author:</div>
<div class="t" style="left:953.30px;top:235px;font-size:12px;line-height:16px;color:#1a1a1a;font-weight:bold;">Date:</div>
<div class="t" style="left:953.30px;top:260px;font-size:12px;line-height:16px;color:#1a1a1a;font-weight:bold;">Committer:</div>
<div class="t" style="left:953.30px;top:284px;font-size:12px;line-height:16px;color:#1a1a1a;font-weight:bold;">Commit Date:</div>
<div class="t" style="left:953.30px;top:309px;font-size:12px;line-height:16px;color:#1a1a1a;font-weight:bold;">Commit ID:</div>
<div class="t" style="left:953.30px;top:335px;font-size:12px;line-height:16px;color:#1a1a1a;font-weight:bold;">Parents:</div>
<div class="t" style="left:953.30px;top:360px;font-size:12px;line-height:16px;color:#1a1a1a;font-weight:bold;">Branches:</div>
<div class="b" style="left:1043.6px;top:185.6px;width:38.8px;height:38.8px;border:1.3px solid #222;border-radius:50%"></div>
<div class="t" style="left:1054.88px;top:193.5px;font-size:19.5px;line-height:25px;color:#111;font-weight:bold;">M</div>
<div class="t" style="left:1093.00px;top:184px;font-size:12px;line-height:16px;color:#1a1a1a;">myusername</div>
<div class="t" style="left:1093.00px;top:210px;font-size:12px;line-height:16px;color:#1a1a1a;">username@mathworks.com</div>
<div class="t" style="left:1043.30px;top:235px;font-size:12px;line-height:16px;color:#1a1a1a;">2024-03-26 04:44:52</div>
<div class="t" style="left:1043.30px;top:260px;font-size:12px;line-height:16px;color:#1a1a1a;">Mona Lisa &lt;monalisa@domain.com&gt;</div>
<div class="t" style="left:1043.30px;top:284px;font-size:12px;line-height:16px;color:#1a1a1a;">2024-04-29 15:13:43</div>
<div class="t" style="left:1043.30px;top:309px;font-size:12px;line-height:16px;color:#1a1a1a;">e14d420</div>
<svg style="left:1094px;top:309px" width="18" height="17" viewBox="1094 309 18 17"><rect x="1095.6" y="310.6" width="9.6" height="9.6" rx="1.3" fill="#d4d4d4" stroke="#aaaaaa" stroke-width="1"/><rect x="1099.8" y="314.6" width="10" height="9.8" rx="1.3" fill="#fff" stroke="#6a6a6a" stroke-width="1"/></svg>
<div class="t" style="left:1043.30px;top:335px;font-size:12px;line-height:16px;color:#2a72c4;">87e6d66</div>
<div class="bd g" style="left:1043px;top:360px;width:32px;height:16px"></div>
<div class="t" style="left:1046.60px;top:360px;font-size:12px;line-height:16px;color:#1a1a1a;">main</div>
<div class="t" style="left:953.40px;top:395px;font-size:12px;line-height:16px;color:#1a1a1a;">Change project name</div>
<svg style="left:951.2px;top:454px" width="9" height="5" viewBox="0 0 9 5"><path d="M0.4 0.2 h7.8 l-3.9 4.1 z" fill="#555"/></svg>
<div class="t gy" style="left:967.00px;top:449px;font-size:12px;line-height:16px;color:#3a3a3a;letter-spacing:-0.13px;">Differences between e14d420 and 83a2083</div>
<svg style="left:970.8px;top:474px" width="5" height="9" viewBox="0 0 5 9"><path d="M0.3 0.3 v7.8 l4.1 -3.9 z" fill="#555"/></svg>
<svg style="left:988px;top:472.4px" width="14" height="12" viewBox="0 0 14 12"><path d="M0.6 2.2 Q0.6 1 1.9 1 H4.8 L6.3 2.8 H11.4 Q12.7 2.8 12.7 4.1 V10.1 Q12.7 11.4 11.4 11.4 H1.9 Q0.6 11.4 0.6 10.1 Z" fill="#fbe9a0" stroke="#8f6f12" stroke-width="1.1"/></svg>
<div class="t gy" style="left:1006.00px;top:471px;font-size:12px;line-height:16px;color:#3a3a3a;letter-spacing:-0.3px;">resources</div>
<svg style="left:969.2px;top:498px" width="9" height="5" viewBox="0 0 9 5"><path d="M0.4 0.2 h7.8 l-3.9 4.1 z" fill="#555"/></svg>
<svg style="left:988px;top:494.4px" width="14" height="12" viewBox="0 0 14 12"><path d="M0.6 2.2 Q0.6 1 1.9 1 H4.8 L6.3 2.8 H11.4 Q12.7 2.8 12.7 4.1 V10.1 Q12.7 11.4 11.4 11.4 H1.9 Q0.6 11.4 0.6 10.1 Z" fill="#fbe9a0" stroke="#8f6f12" stroke-width="1.1"/></svg>
<div class="t gy" style="left:1006.00px;top:493px;font-size:12px;line-height:16px;color:#3a3a3a;letter-spacing:-0.27px;">tests</div>
<svg style="left:1006.2px;top:515px" width="13" height="15" viewBox="0 0 13 15"><path d="M2 0.6 H8.6 L12.4 4.4 V13 Q12.4 14.4 11 14.4 H2 Q0.6 14.4 0.6 13 V2 Q0.6 0.6 2 0.6 Z" fill="#fff" stroke="#5a5a5a" stroke-width="1"/><path d="M8.6 0.8 V4.4 H12.2" fill="none" stroke="#5a5a5a" stroke-width="0.8"/><path d="M3 6.5 H10 M3 8.5 H10 M3 10.5 H10 M3 12.5 H8" stroke="#5a5a5a" stroke-width="0.9"/></svg>
<div class="t gy" style="left:1024.00px;top:515px;font-size:12px;line-height:16px;color:#3a3a3a;letter-spacing:-0.25px;">f14_airframe_test.m</div>
<svg style="left:988px;top:537px" width="13" height="15" viewBox="0 0 13 15"><path d="M2 0.6 H8.6 L12.4 4.4 V13 Q12.4 14.4 11 14.4 H2 Q0.6 14.4 0.6 13 V2 Q0.6 0.6 2 0.6 Z" fill="#fff" stroke="#5a5a5a" stroke-width="1"/><path d="M8.6 0.8 V4.4 H12.2" fill="none" stroke="#5a5a5a" stroke-width="0.8"/><path d="M3 6.5 H10 M3 8.5 H10 M3 10.5 H10 M3 12.5 H8" stroke="#5a5a5a" stroke-width="0.9"/></svg>
<div class="t gy" style="left:1006.00px;top:537px;font-size:12px;line-height:16px;color:#3a3a3a;letter-spacing:-0.27px;">AiframeGit_UXTests.prj</div>
<svg style="left:988px;top:559px" width="13" height="15" viewBox="0 0 13 15"><path d="M2 0.6 H8.6 L12.4 4.4 V13 Q12.4 14.4 11 14.4 H2 Q0.6 14.4 0.6 13 V2 Q0.6 0.6 2 0.6 Z" fill="#fff" stroke="#5a5a5a" stroke-width="1"/><path d="M8.6 0.8 V4.4 H12.2" fill="none" stroke="#5a5a5a" stroke-width="0.8"/><path d="M3 6.5 H10 M3 8.5 H10 M3 10.5 H10 M3 12.5 H8" stroke="#5a5a5a" stroke-width="0.9"/></svg>
<div class="t gy" style="left:1006.00px;top:559px;font-size:12px;line-height:16px;color:#3a3a3a;letter-spacing:-0.13px;">Aiframe_forDoc.prj</div>
<svg style="left:988px;top:581px" width="13" height="15" viewBox="0 0 13 15"><path d="M2 0.6 H8.6 L12.4 4.4 V13 Q12.4 14.4 11 14.4 H2 Q0.6 14.4 0.6 13 V2 Q0.6 0.6 2 0.6 Z" fill="#fff" stroke="#5a5a5a" stroke-width="1"/><path d="M8.6 0.8 V4.4 H12.2" fill="none" stroke="#5a5a5a" stroke-width="0.8"/><path d="M3 6.5 H10 M3 8.5 H10 M3 10.5 H10 M3 12.5 H8" stroke="#5a5a5a" stroke-width="0.9"/></svg>
<div class="t gy" style="left:1006.00px;top:581px;font-size:12px;line-height:16px;color:#3a3a3a;letter-spacing:-0.64px;">README.md</div>
<div class="b" style="left:1222px;top:517px;width:11px;height:11px;background:#8fcbfd;border:1px solid #1f66bb"></div>
<div class="b" style="left:1222px;top:583px;width:11px;height:11px;background:#8fcbfd;border:1px solid #1f66bb"></div>
<div class="b" style="left:1223px;top:544px;width:10px;height:2px;background:#555"></div>
<div class="b" style="left:1223px;top:566px;width:10px;height:2px;background:#555"></div>
<div class="b" style="left:1227px;top:562px;width:2px;height:10px;background:#555"></div>
<div class="b" style="left:943px;top:694px;width:314px;height:23px;background:#e6e6e6;border-top:1px solid #c6c6c6"></div>
<svg style="left:1242px;top:700px" width="10" height="12" viewBox="0 0 10 12"><path d="M7.4 0 h2 v12 h-2 z M0.2 0 v12 l6.6 -6 z" fill="#9a9a9a"/></svg>
<div id="frame"></div>
</body>
</html>
